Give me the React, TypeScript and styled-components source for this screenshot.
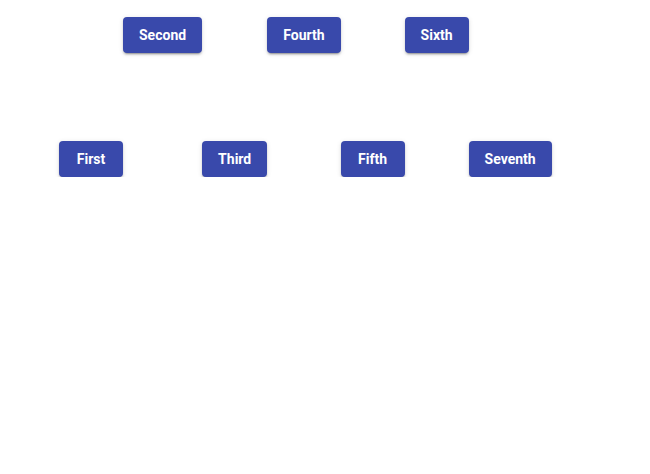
import React from "react";
import styled, { createGlobalStyle } from "styled-components";

const GlobalStyle = createGlobalStyle`
  body {
    margin: 0;
    background: #fff;
    font-family: Roboto, "Liberation Sans", sans-serif;
  }
`;

const items = ["First", "Second", "Third", "Fourth", "Fifth", "Sixth", "Seventh"];

const App = () => {
  return (
    <>
      <GlobalStyle />
      <Row>
        {items.map((label, index) => (
          <Cell key={label} raised={index % 2 === 1}>
            <Button>{label}</Button>
          </Cell>
        ))}
      </Row>
    </>
  );
};

const Row = styled.div`
  display: flex;
  align-items: flex-end;
  height: 160px;
  padding: 17px 0 0 59px;
`;

interface CellProps {
  raised: boolean;
}
const Cell = styled.div<CellProps>`
  display: flex;
  align-self: ${({ raised }) => (raised ? "flex-start" : "flex-end")};
`;

const Button = styled.button`
  min-width: 64px;
  height: 36px;
  padding: 0 16px;
  border: none;
  border-radius: 4px;
  background: #3949ab;
  color: #fff;
  font-family: Roboto, "Liberation Sans", sans-serif;
  font-size: 14px;
  font-weight: 700;
  cursor: pointer;
  box-shadow: 0 3px 1px -2px rgba(0, 0, 0, 0.2), 0 2px 2px 0 rgba(0, 0, 0, 0.14),
    0 1px 5px 0 rgba(0, 0, 0, 0.12);
`;

export default App;
